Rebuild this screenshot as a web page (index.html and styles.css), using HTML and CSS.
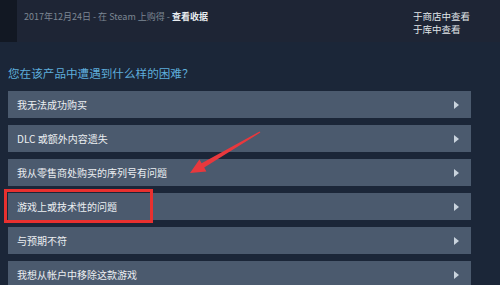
FILE: index.html
```html
<!DOCTYPE html>
<html lang="zh-CN">
<head>
<meta charset="UTF-8">
<title>Steam 客服</title>
<link rel="stylesheet" href="styles.css">
</head>
<body>
<div class="top">
    <div class="purchase">
        <div class="purchase-info">2017年12月24日 - 在 Steam 上购得 - <b>查看收据</b></div>
        <div class="purchase-links">
            <a href="#">于商店中查看</a>
            <a href="#">于库中查看</a>
        </div>
    </div>
</div>

<h2 class="question">您在该产品中遭遇到什么样的困难？</h2>

<div class="options">
    <div class="option"><span>我无法成功购买</span><i class="play"></i></div>
    <div class="option"><span>DLC 或额外内容遗失</span><i class="play"></i></div>
    <div class="option"><span>我从零售商处购买的序列号有问题</span><i class="play"></i></div>
    <div class="option">
        <span>游戏上或技术性的问题</span><i class="play"></i>
        <div class="mark"></div>
    </div>
    <div class="option"><span>与预期不符</span><i class="play"></i></div>
    <div class="option"><span>我想从帐户中移除这款游戏</span><i class="play"></i></div>
</div>

<!-- red arrow drawn on top of the screenshot -->
<svg class="arrow" width="500" height="285" viewBox="0 0 500 285">
    <polygon fill="#e8383d" points="259.6,131.4 201.6,163.2 199.4,159.4 190,173 206.4,171.4 204.2,167.6 260.4,132.6"/>
</svg>
</body>
</html>
```

FILE: styles.css
```css
/* Steam support page */
body {
    margin: 0;
    width: 500px;
    height: 285px;
    overflow: hidden;
    position: relative;
    background: #1b2638;
    font-family: "Noto Sans CJK SC", "Noto Sans", sans-serif;
    color: #eceff2;
}
.top {
    background: #121823;
    padding-left: 17px;
}
.purchase {
    height: 42px;
    background: #1e2535;
    display: flex;
    justify-content: space-between;
    padding: 0 30px 0 7px;
    box-sizing: border-box;
}
.purchase-info {
    font-size: 9px;
    color: #7d8793;
    padding-top: 10px;
}
.purchase-info b {
    color: #e8ecef;
}
.purchase-links {
    display: flex;
    flex-direction: column;
    padding-top: 10px;
    line-height: 13px;
}
.purchase-links a {
    font-size: 9.5px;
    color: #e1e5e9;
    text-decoration: none;
}
.question {
    margin: 22px 0 0 8px;
    font-size: 11.6px;
    font-weight: normal;
    color: #5eaddb;
    line-height: 18px;
}
.options {
    margin: 9px 0 0 8px;
    width: 463px;
    display: flex;
    flex-direction: column;
    gap: 7px;
}
.option {
    position: relative;
    height: 27px;
    background: #4b5a6e;
    display: flex;
    align-items: center;
    justify-content: space-between;
    padding: 0 12px 0 9px;
    font-size: 10px;
}
.play {
    width: 0;
    height: 0;
    border-top: 4px solid transparent;
    border-bottom: 4px solid transparent;
    border-left: 5px solid #c9d3dd;
}
.mark {
    position: absolute;
    left: -4px;
    top: -4px;
    width: 149px;
    height: 34px;
    border: 3px solid #e8302f;
    box-sizing: border-box;
}
.arrow {
    position: absolute;
    left: 0;
    top: 0;
    pointer-events: none;
}
```
